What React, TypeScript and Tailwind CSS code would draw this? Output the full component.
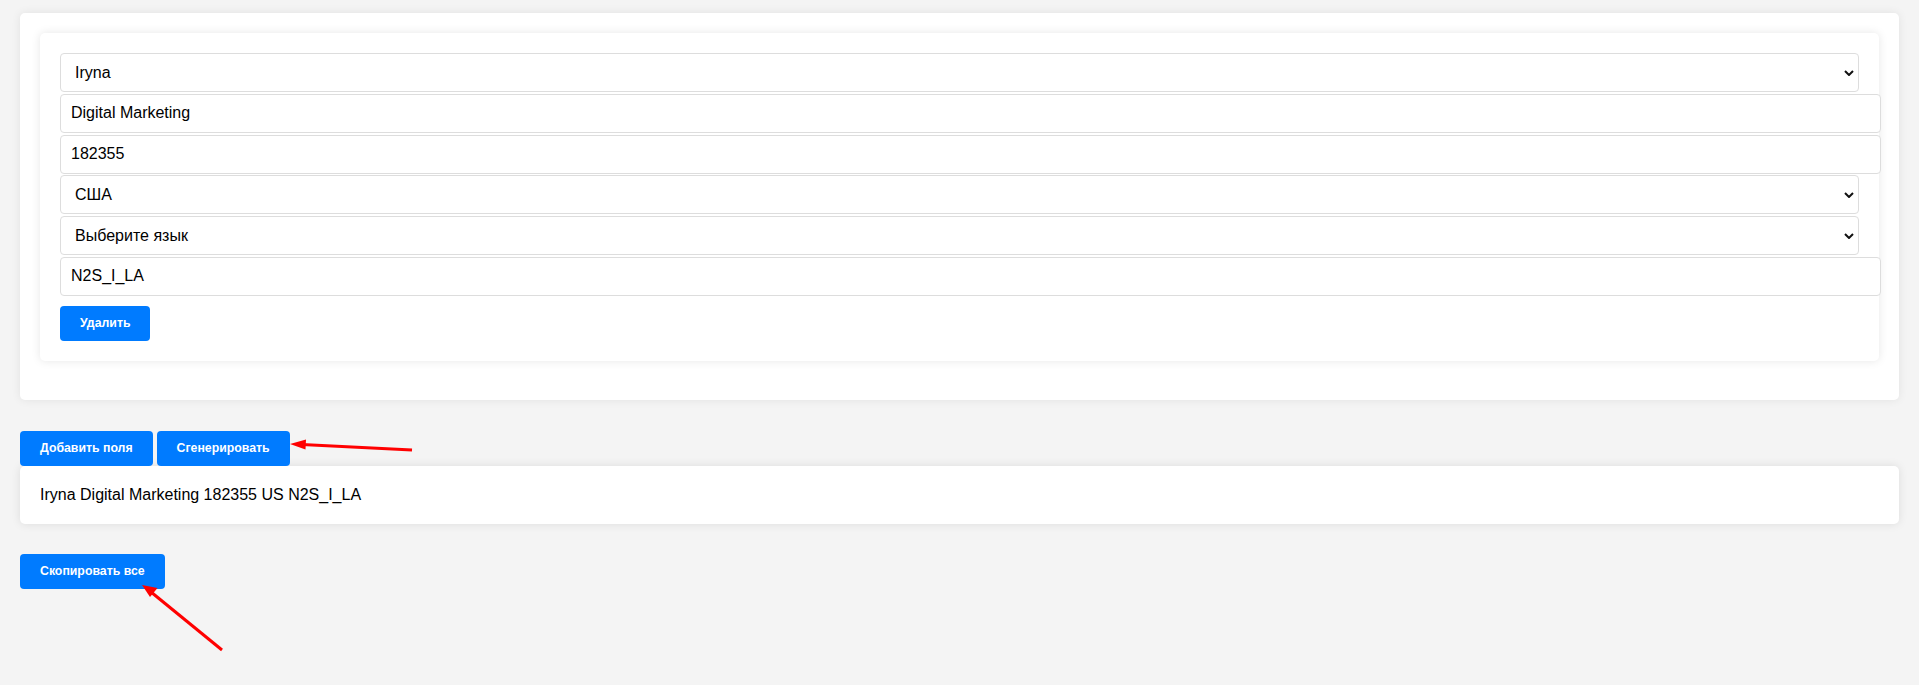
import React from "react";

const fieldBase =
  "block h-[39px] border border-[#dddddd] rounded-[4px] bg-white text-[16px] text-black outline-none";

function Chevron() {
  return (
    <svg
      width="10"
      height="6"
      viewBox="0 0 10 6"
      className="absolute right-[5px] top-1/2 -translate-y-1/2 pointer-events-none">
      <path d="M1 1 L5 5 L9 1" fill="none" stroke="#111" strokeWidth="2" />
    </svg>
  );
}

function SelectField({ value }: { value: string }) {
  return (
    <div className="relative w-full">
      <select
        defaultValue={value}
        className={`${fieldBase} w-full appearance-none pl-[14px] pr-[24px]`}>
        <option>{value}</option>
      </select>
      <Chevron />
    </div>
  );
}

function TextField({ value }: { value: string }) {
  return (
    <input
      defaultValue={value}
      className={`${fieldBase} w-[calc(100%+22px)] px-[10px]`}
    />
  );
}

function Btn({ children }: { children: React.ReactNode }) {
  return (
    <button className="h-[35px] px-[20px] bg-[#007bff] text-white text-[12.3px] font-bold rounded-[4px] leading-none">
      {children}
    </button>
  );
}

export default function App() {
  return (
    <div
      className="relative min-h-[685px] bg-[#f4f4f4] px-[20px] pt-[13px] text-black"
      style={{ fontFamily: '"Liberation Sans", Arial, sans-serif' }}>
      <div className="bg-white rounded-[5px] p-[20px] shadow-[0_0_10px_rgba(0,0,0,0.08)]">
        <div className="bg-white rounded-[5px] p-[20px] mb-[19px] shadow-[0_0_10px_rgba(0,0,0,0.1)]">
          <div className="flex flex-col gap-[1.8px]">
            <SelectField value="Iryna" />
            <TextField value="Digital Marketing" />
            <TextField value="182355" />
            <SelectField value="США" />
            <SelectField value="Выберите язык" />
            <TextField value="N2S_I_LA" />
          </div>
          <div className="mt-[10px]">
            <Btn>Удалить</Btn>
          </div>
        </div>
      </div>

      <div className="flex gap-[4px] mt-[31px]">
        <Btn>Добавить поля</Btn>
        <Btn>Сгенерировать</Btn>
      </div>
      <div className="bg-white rounded-[5px] p-[20px] text-[16px] leading-[18px] shadow-[0_0_10px_rgba(0,0,0,0.1)]">
        Iryna Digital Marketing 182355 US N2S_I_LA
      </div>

      <div className="mt-[30px]">
        <Btn>Скопировать все</Btn>
      </div>

      <svg
        width="1919"
        height="685"
        className="absolute inset-0 pointer-events-none">
        <line x1="412" y1="450" x2="302" y2="444.6" stroke="#ff0000" strokeWidth="3" />
        <polygon points="290,444 306,439.5 305.5,449.5" fill="#ff0000" />
        <line x1="222" y1="650" x2="151" y2="592" stroke="#ff0000" strokeWidth="3" />
        <polygon points="142,585 157.5,588 150,597" fill="#ff0000" />
      </svg>
    </div>
  );
}
